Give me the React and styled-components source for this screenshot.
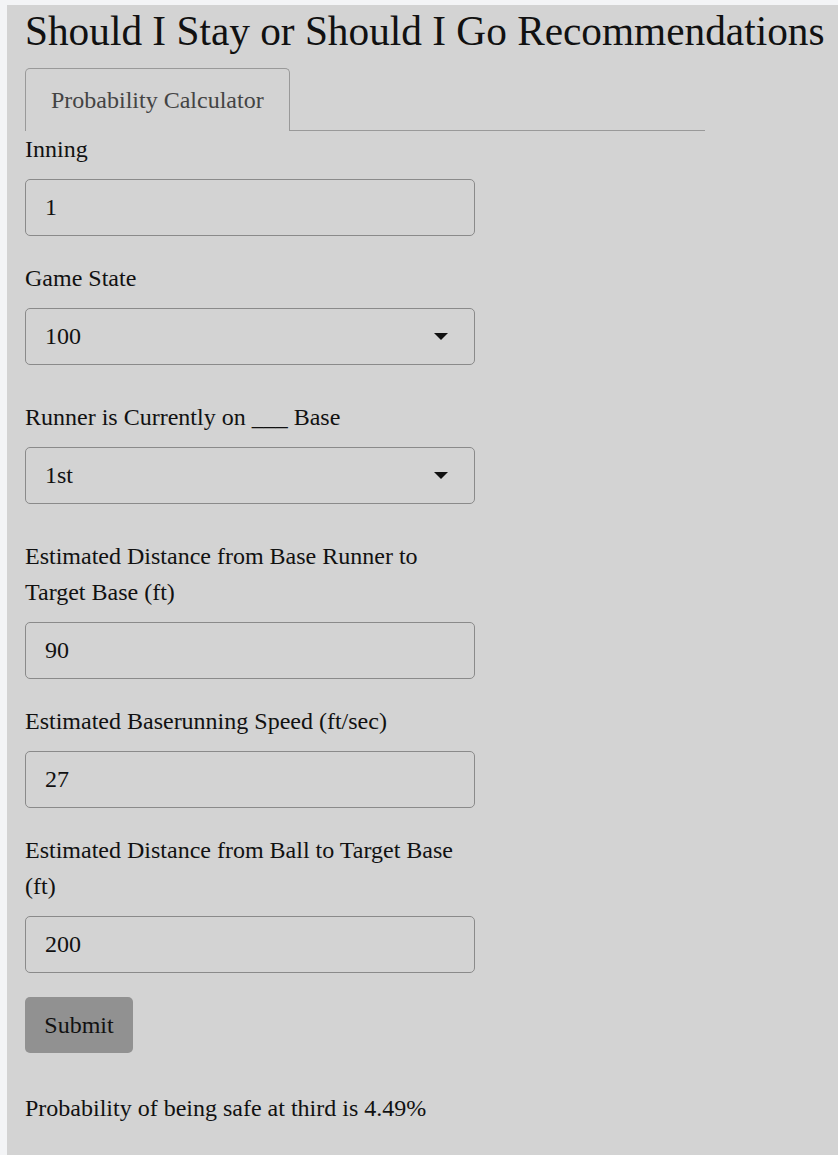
import React from 'react';
import styled, { createGlobalStyle } from 'styled-components';

const GlobalStyle = createGlobalStyle`
  html, body {
    margin: 0;
    padding: 0;
    background: #f3f4f6;
  }
  body {
    padding: 5px 0 0 7px;
    font-family: "Liberation Serif", "Times New Roman", serif;
  }
`;

const Panel = styled.div`
  background: #d3d3d3;
  min-height: 1150px;
  padding: 0 0 0 18px;
  color: #111;
  display: flex;
  flex-direction: column;
`;

const Title = styled.h1`
  margin: 0;
  font-weight: 400;
  font-size: 41.3px;
  line-height: 52px;
  white-space: nowrap;
`;

const TabBar = styled.div`
  display: flex;
  width: 680px;
  margin-top: 11px;
  border-bottom: 1px solid #999;
`;

const Tab = styled.div`
  padding: 0 25px;
  height: 62px;
  display: flex;
  align-items: center;
  font-size: 24px;
  color: #444;
  border: 1px solid #999;
  border-bottom: none;
  border-radius: 5px 5px 0 0;
  margin-bottom: -1px;
  background: #d3d3d3;
`;

const Form = styled.form`
  display: flex;
  flex-direction: column;
  width: 450px;
`;

const Field = styled.div`
  display: flex;
  flex-direction: column;
  margin-bottom: ${({ $select }) => ($select ? '34.5px' : '24.5px')};
`;

const Label = styled.label`
  font-size: 24px;
  line-height: 36px;
  margin-bottom: 11.5px;
`;

const Box = styled.div`
  box-sizing: border-box;
  height: 57px;
  border: 1px solid #8a8a8a;
  border-radius: 5px;
  display: flex;
  align-items: center;
  justify-content: space-between;
  padding: 0 26px 0 19px;
  font-size: 24px;
`;

const Arrow = styled.span`
  width: 0;
  height: 0;
  border-left: 7.5px solid transparent;
  border-right: 7.5px solid transparent;
  border-top: 7px solid #111;
`;

const Button = styled.div`
  width: 108px;
  height: 56px;
  box-sizing: border-box;
  background: #919191;
  border-radius: 5px;
  display: flex;
  align-items: center;
  justify-content: center;
  font-size: 24px;
`;

const Result = styled.p`
  margin: 37px 0 0;
  font-size: 24px;
  line-height: 36px;
`;

const fields = [
  { label: 'Inning', value: '1' },
  { label: 'Game State', value: '100', select: true },
  { label: 'Runner is Currently on ___ Base', value: '1st', select: true },
  { label: 'Estimated Distance from Base Runner to Target Base (ft)', value: '90' },
  { label: 'Estimated Baserunning Speed (ft/sec)', value: '27' },
  { label: 'Estimated Distance from Ball to Target Base (ft)', value: '200' },
];

const App = () => (
  <>
    <GlobalStyle />
    <Panel>
      <Title>Should I Stay or Should I Go Recommendations</Title>
      <TabBar>
        <Tab>Probability Calculator</Tab>
      </TabBar>
      <Form>
        {fields.map((f) => (
          <Field key={f.label} $select={f.select}>
            <Label>{f.label}</Label>
            <Box>
              <span>{f.value}</span>
              {f.select && <Arrow />}
            </Box>
          </Field>
        ))}
        <Button>Submit</Button>
      </Form>
      <Result>Probability of being safe at third is 4.49%</Result>
    </Panel>
  </>
);

export default App;
